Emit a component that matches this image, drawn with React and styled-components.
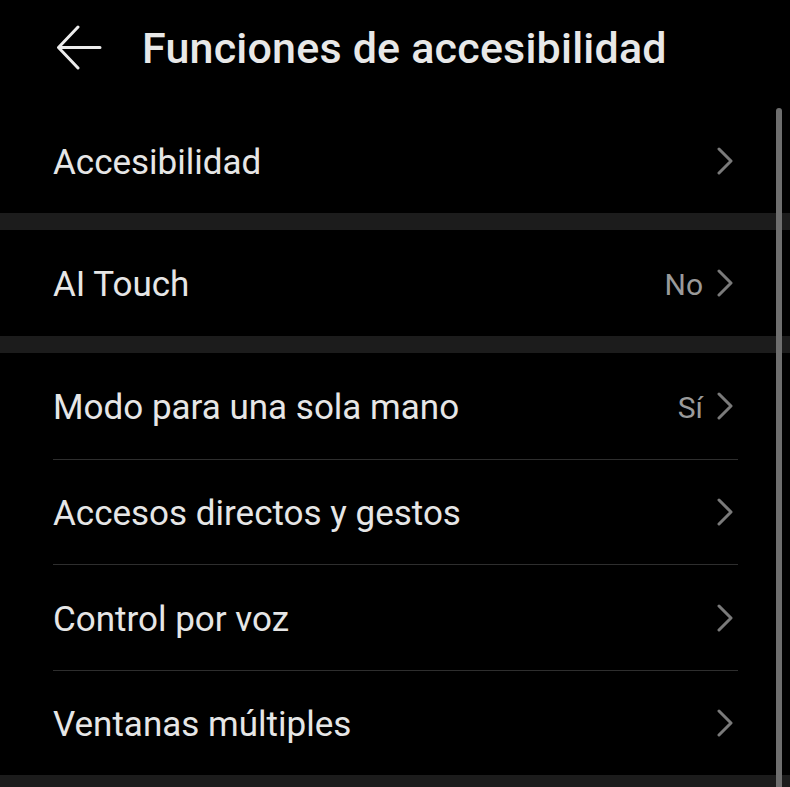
import React from 'react';
import styled, { createGlobalStyle } from 'styled-components';

const Global = createGlobalStyle`
  html, body {
    margin: 0;
    padding: 0;
    background: #000;
  }
  body {
    font-family: Roboto, "Noto Sans", sans-serif;
    -webkit-font-smoothing: antialiased;
  }
  * {
    box-sizing: border-box;
  }
`;

const Screen = styled.div`
  position: relative;
  width: 790px;
  height: 787px;
  overflow: hidden;
  background: #000;
`;

const Header = styled.header`
  display: flex;
  align-items: center;
  height: 96px;
  padding-left: 56px;
  gap: 40px;
`;

const BackButton = styled.button`
  display: flex;
  align-items: center;
  justify-content: center;
  width: 46px;
  height: 46px;
  padding: 0;
  border: 0;
  background: none;
  color: #ececec;
`;

const Title = styled.h1`
  margin: 0;
  font-size: 43px;
  font-weight: 500;
  letter-spacing: 0.2px;
  color: #e8e8e8;
`;

const Group = styled.section`
  padding: ${(p) => p.$top || 0}px 52px 0 53px;
`;

const Band = styled.div`
  height: 17px;
  background: #1c1c1c;
`;

const Row = styled.div`
  display: flex;
  align-items: center;
  height: ${(p) => p.$h || 105}px;
  border-top: ${(p) => (p.$divider ? '1px solid #2e2e2e' : 'none')};
`;

const Label = styled.span`
  flex: 1;
  padding-top: 3px;
  font-size: 35px;
  color: #e6e6e6;
`;

const Value = styled.span`
  padding-top: 3px;
  font-size: 30px;
  color: #9a9a9a;
  margin-right: 13px;
`;

const Chevron = styled.svg`
  width: 18px;
  height: 28px;
  margin-right: 4px;
`;

const ScrollThumb = styled.div`
  position: absolute;
  top: 108px;
  right: 8px;
  width: 6px;
  height: 700px;
  border-radius: 3px;
  background: #6e6e6e;
`;

const Arrow = () => (
  <svg width="46" height="46" viewBox="0 0 46 46" fill="none">
    <path
      d="M44 22.5H3M22 2L2.5 22.5L22 43"
      stroke="currentColor"
      strokeWidth="3"
      strokeLinecap="round"
      strokeLinejoin="round"
    />
  </svg>
);

const Next = () => (
  <Chevron viewBox="0 0 18 28" fill="none">
    <path d="M3 2L15 14L3 26" stroke="#7a7a7a" strokeWidth="3" strokeLinecap="round" strokeLinejoin="round" />
  </Chevron>
);

const Item = ({ label, value, divider, h }) => (
  <Row $divider={divider} $h={h}>
    <Label>{label}</Label>
    {value && <Value>{value}</Value>}
    <Next />
  </Row>
);

export default function App() {
  return (
    <Screen>
      <Global />
      <Header>
        <BackButton aria-label="Atrás">
          <Arrow />
        </BackButton>
        <Title>Funciones de accesibilidad</Title>
      </Header>
      <Group $top={12}>
        <Item label="Accesibilidad" />
      </Group>
      <Band />
      <Group>
        <Item label="AI Touch" value="No" h={106} />
      </Group>
      <Band />
      <Group>
        <Item label="Modo para una sola mano" value="Sí" h={106} />
        <Item label="Accesos directos y gestos" divider />
        <Item label="Control por voz" divider h={106} />
        <Item label="Ventanas múltiples" divider />
      </Group>
      <Band />
      <ScrollThumb />
    </Screen>
  );
}
